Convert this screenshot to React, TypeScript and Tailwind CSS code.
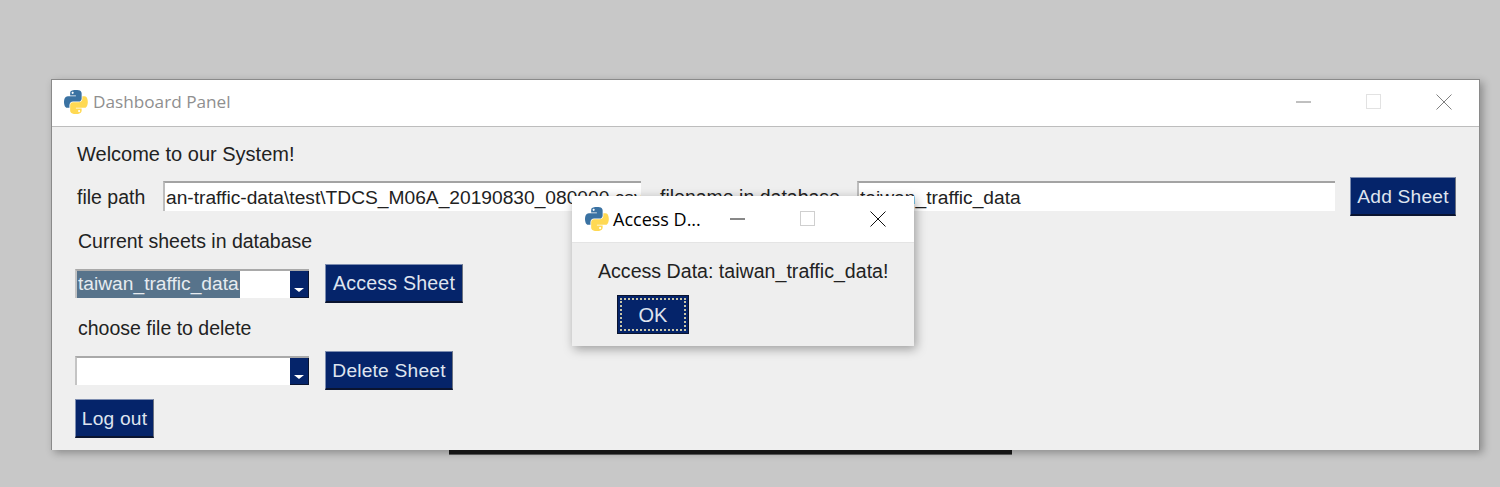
import React from "react";

const sans = "font-['Liberation_Sans',Arial,sans-serif]";
const titleFont = "font-['Open_Sans','Noto_Sans',sans-serif]";

const PythonLogo = ({ size }: { size: number }) => (
  <svg width={size} height={size} viewBox="0 0 112 112" className="shrink-0">
    <path
      fill="#3a72a2"
      d="M54.9 0C50.3 0 46 .4 42.1 1.1 30.8 3.1 28.7 7.3 28.7 15v10.2h26.8v3.4H18.6C10.8 28.7 4 33.3 1.9 42.2c-2.5 10.2-2.6 16.6 0 27.3 1.9 7.9 6.5 13.6 14.2 13.6h9.2V70.8c0-8.8 7.7-16.6 16.8-16.6h26.8c7.5 0 13.4-6.2 13.4-13.6V15C82.3 7.7 76.2 2.3 68.9 1.1 64.3.3 59.5 0 54.9 0Zm-14.5 8.2c2.8 0 5 2.3 5 5.1 0 2.8-2.3 5.1-5 5.1-2.8 0-5-2.3-5-5.1 0-2.8 2.3-5.1 5-5.1Z"
    />
    <path
      fill="#ffd953"
      d="M85.6 28.7v11.9c0 9.2-7.8 17-16.8 17H42.1c-7.3 0-13.4 6.3-13.4 13.6v25.5c0 7.3 6.3 11.5 13.4 13.6 8.5 2.5 16.6 2.9 26.8 0 6.8-2 13.4-5.9 13.4-13.6V86.5H55.5v-3.4h40.2c7.8 0 10.7-5.4 13.4-13.6 2.8-8.4 2.7-16.5 0-27.2-1.9-7.8-5.6-13.6-13.4-13.6ZM70.6 93.3c2.8 0 5 2.3 5 5.1 0 2.8-2.3 5.1-5 5.1-2.8 0-5-2.3-5-5.1 0-2.8 2.3-5.1 5-5.1Z"
    />
  </svg>
);

const WindowControls = ({ color, boxColor }: { color: string; boxColor: string }) => (
  <>
    <svg width="16" height="16" viewBox="0 0 16 16" className="shrink-0">
      <path d="M0 8h15" stroke={color} strokeWidth="1" fill="none" />
    </svg>
    <svg width="16" height="16" viewBox="0 0 16 16" className="shrink-0">
      <rect x="0.5" y="0.5" width="14" height="14" stroke={boxColor} strokeWidth="1" fill="none" />
    </svg>
    <svg width="16" height="16" viewBox="0 0 16 16" className="shrink-0">
      <path d="M0.5 0.5l15 15M15.5 0.5l-15 15" stroke={color} strokeWidth="1" fill="none" />
    </svg>
  </>
);

const TkButton = ({ label, className }: { label: string; className: string }) => (
  <button
    className={`h-[39px] shrink-0 border border-t-[#7d8db0] border-l-[#7d8db0] border-r-[#6b7280] border-b-2 border-b-[#0a1430] bg-[#05246a] pt-[2px] text-center leading-none tracking-[0.2px] text-[#dfe4ef] ${className}`}
  >
    {label}
  </button>
);

const Combo = ({ selected }: { selected?: string }) => (
  <div className="flex h-[29px] w-[234px] shrink-0 border-t-2 border-l-2 border-t-[#a9a9a9] border-l-[#c4c4c4] bg-white">
    <div className="flex min-w-0 flex-1 items-center">
      {selected && (
        <span className="h-full bg-[#57738b] px-[1px] text-[19.2px] leading-[26px] text-[#e6ebf0]">{selected}</span>
      )}
    </div>
    <div className="relative w-[19px] shrink-0 border-r border-b border-[#0a1430] bg-[#05246a]">
      <div className="absolute bottom-[5px] left-[4px] h-0 w-0 border-x-[5px] border-t-[4px] border-x-transparent border-t-white" />
    </div>
  </div>
);

const Entry = ({ value, className }: { value: string; className: string }) => (
  <div
    className={`mb-[1px] h-[30px] shrink-0 overflow-hidden whitespace-nowrap border-t-2 border-l-2 border-t-[#a3a3a3] border-l-[#bdbdbd] bg-white pl-[1px] text-[19.2px] leading-[30px] text-[#222222] ${className}`}
  >
    {value}
  </div>
);

export default function App() {
  return (
    <div className={`h-[487px] w-[1500px] overflow-hidden bg-[#c8c8c8] pl-[51px] pt-[79px] ${sans}`}>
      <div className="relative h-[371px] w-[1429px] border border-b-0 border-[#8a8a8a] bg-[#efefef] shadow-[3px_3px_8px_rgba(0,0,0,0.3)]">
        {/* main title bar */}
        <div className="flex h-[47px] items-center border-b border-[#bdbdbd] bg-white pb-[2px] pl-[12px]">
          <PythonLogo size={24} />
          <span className={`ml-[5px] text-[17.2px] text-[#8f8f8f] ${titleFont}`}>Dashboard Panel</span>
          <div className="ml-auto flex items-center gap-[54px] pr-[27px]">
            <WindowControls color="#808080" boxColor="#e2e2e2" />
          </div>
        </div>

        {/* form */}
        <div className="flex flex-col px-[23px] text-[19.5px] text-[#222222]">
          <div className="flex h-[50px] items-center pl-[2px] pt-[3px] text-[20px]">Welcome to our System!</div>

          <div className="flex h-[39px] items-center">
            <span className="ml-[2px] w-[86px] shrink-0 pt-[2px]">file path</span>
            <Entry value="an-traffic-data\test\TDCS_M06A_20190830_080000.csv" className="w-[478px]" />
            <span className="ml-[19px] w-[197px] shrink-0 whitespace-nowrap pt-[2px]">filename in database</span>
            <Entry value="taiwan_traffic_data" className="w-[478px]" />
            <TkButton label="Add Sheet" className="ml-[15px] w-[106px] text-[19.2px]" />
          </div>

          <div className="flex h-[48px] items-center pl-[3px] pt-[4px]">Current sheets in database</div>

          <div className="flex h-[39px] items-center">
            <Combo selected="taiwan_traffic_data" />
            <TkButton label="Access Sheet" className="ml-[16px] w-[138px] text-[19.6px]" />
          </div>

          <div className="flex h-[48px] items-center pl-[3px] pt-[4px]">choose file to delete</div>

          <div className="flex h-[39px] items-center">
            <Combo />
            <TkButton label="Delete Sheet" className="ml-[16px] w-[128px] text-[19.2px]" />
          </div>

          <TkButton label="Log out" className="mt-[9px] w-[79px] text-[19.2px]" />
        </div>

        {/* message box over the main window */}
        <div className="absolute left-[520px] top-[116px] h-[150px] w-[342px] bg-[#eeeeee] shadow-[2px_3px_10px_rgba(0,0,0,0.35)]">
          <div className="flex h-[47px] items-center border-b border-[#e4e4e4] bg-white pl-[13px]">
            <PythonLogo size={24} />
            <span className={`ml-[4px] w-[104px] shrink-0 whitespace-nowrap text-[18px] text-black ${titleFont}`}>Access D...</span>
            <div className="ml-[13px] flex items-center gap-[54px]">
              <WindowControls color="#111111" boxColor="#cfcfcf" />
            </div>
          </div>
          <div className="pl-[26px] pt-[17px] text-[19.6px] leading-[23px] text-[#222222]">Access Data: taiwan_traffic_data!</div>
          <div className="pl-[45px] pt-[12px]">
            <button className="h-[39px] w-[72px] border border-[#0a1430] bg-[#05246a] p-[2px] text-[20px] leading-none text-[#dfe4ef]">
              <span className="flex h-full w-full items-center justify-center border-2 border-dotted border-[#c9c6a8]">OK</span>
            </button>
          </div>
        </div>

        {/* edge of another window peeking out below */}
        <div className="absolute left-[397px] top-[370px] h-[5px] w-[563px] border-b border-[#555555] bg-[#141414]" />
      </div>
    </div>
  );
}
